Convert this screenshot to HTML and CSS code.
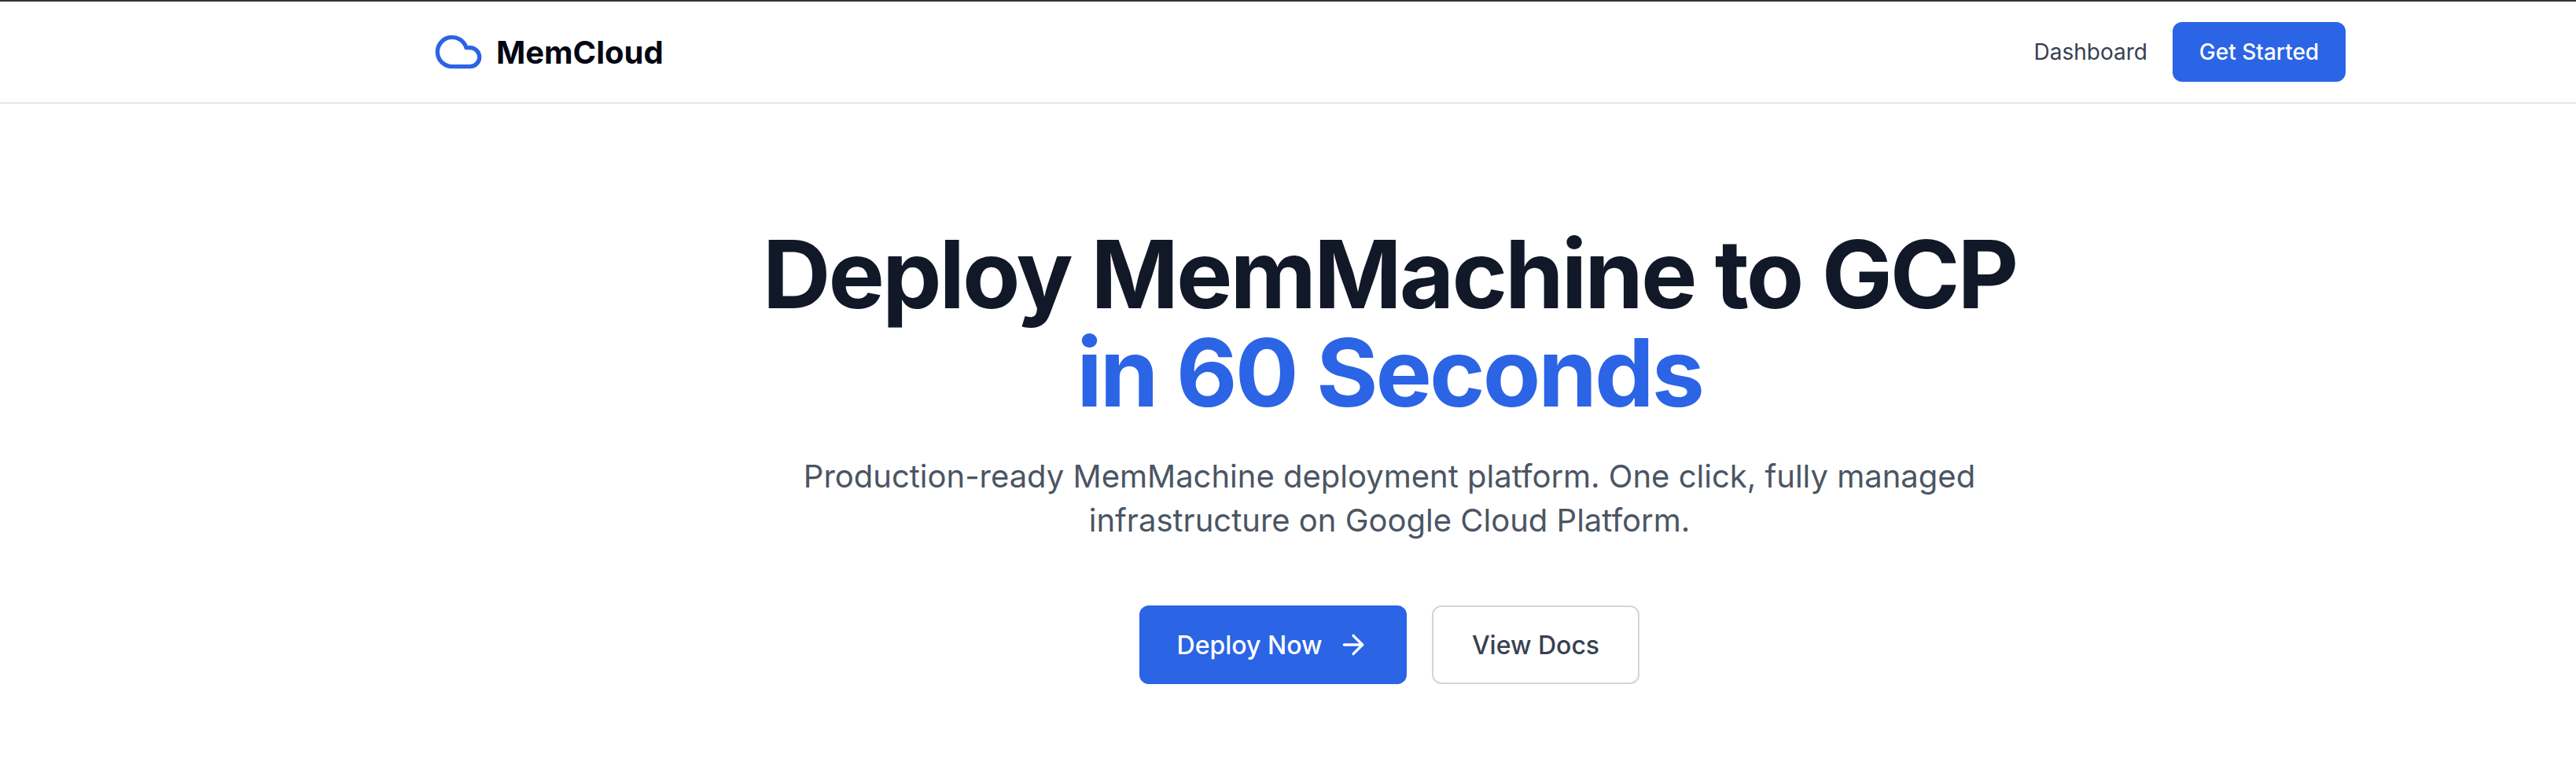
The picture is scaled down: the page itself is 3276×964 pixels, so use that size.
FILE: index.html
```html
<!DOCTYPE html>
<html lang="en">

<head>
	<meta charset="UTF-8">
	<meta name="viewport" content="width=device-width, initial-scale=1.0">
	<title>MemCloud</title>
	<link rel="stylesheet" href="styles.css">
</head>

<body>
	<header class="site-header">
		<div class="nav">
			<a class="brand" href="#">
				<svg class="brand-icon" viewBox="0 0 24 24" fill="none" stroke="currentColor" stroke-width="2" stroke-linecap="round" stroke-linejoin="round">
					<path d="M17.5 19H9a7 7 0 1 1 6.71-9h1.79a4.5 4.5 0 1 1 0 9Z" />
				</svg>
				<span class="brand-name">MemCloud</span>
			</a>
			<nav class="nav-links">
				<a class="nav-link" href="#">Dashboard</a>
				<a class="btn-small" href="#">Get Started</a>
			</nav>
		</div>
	</header>

	<main class="hero">
		<h1 class="hero-title">Deploy MemMachine to GCP<span class="hero-accent">in 60 Seconds</span></h1>
		<p class="hero-text">Production-ready MemMachine deployment platform. One click, fully managed infrastructure on Google Cloud Platform.</p>
		<div class="hero-actions">
			<a class="btn btn-primary" href="#">Deploy Now
				<svg class="btn-icon" viewBox="0 0 24 24" fill="none" stroke="currentColor" stroke-width="2" stroke-linecap="round" stroke-linejoin="round">
					<path d="M5 12h14" />
					<path d="m12 5 7 7-7 7" />
				</svg>
			</a>
			<a class="btn btn-outline" href="#">View Docs</a>
		</div>
	</main>
</body>

</html>
```

FILE: styles.css
```css
* {
	box-sizing: border-box;
}

body {
	margin: 0;
	font-family: Inter, "Noto Sans", sans-serif;
	background-color: #fff;
	color: #111827;
}

a {
	text-decoration: none;
}

.site-header {
	height: 132px;
	padding-left: 258px;
	border-top: 2px solid #333;
	border-bottom: 2px solid #e5e7eb;
}

.nav {
	width: 2432px;
	height: 128px;
	margin: 0 auto;
	display: flex;
	align-items: center;
	justify-content: space-between;
}

.brand {
	display: flex;
	align-items: center;
	gap: 16px;
	color: #2b64e5;
}

.brand-icon {
	width: 64px;
	height: 64px;
}

.brand-name {
	font-size: 40px;
	font-weight: 700;
	color: #030712;
}

.nav-links {
	display: flex;
	align-items: center;
	gap: 32px;
}

.nav-link {
	font-size: 28px;
	color: #374151;
}

.btn-small {
	display: flex;
	align-items: center;
	justify-content: center;
	width: 220px;
	height: 76px;
	border-radius: 12px;
	background-color: #2b64e5;
	color: #fff;
	font-size: 28px;
	font-weight: 500;
}

.hero {
	display: flex;
	flex-direction: column;
	align-items: center;
	padding-top: 154px;
	padding-left: 258px;
	text-align: center;
}

.hero-title {
	margin: 0;
	font-size: 120px;
	line-height: 125px;
	font-weight: 700;
	letter-spacing: -3px;
	color: #111827;
}

.hero-accent {
	display: block;
	color: #2b64e5;
}

.hero-text {
	width: 1600px;
	margin: 42px 0 0;
	font-size: 40px;
	line-height: 56px;
	color: #4b5563;
}

.hero-actions {
	display: flex;
	gap: 32px;
	margin-top: 80px;
}

.btn {
	display: flex;
	align-items: center;
	justify-content: center;
	gap: 20px;
	height: 100px;
	border-radius: 12px;
	font-size: 32px;
	font-weight: 500;
}

.btn-primary {
	width: 340px;
	background-color: #2b64e5;
	color: #fff;
}

.btn-outline {
	width: 264px;
	border: 2px solid #d1d5db;
	background-color: #fff;
	color: #374151;
}

.btn-icon {
	width: 40px;
	height: 40px;
}
```
